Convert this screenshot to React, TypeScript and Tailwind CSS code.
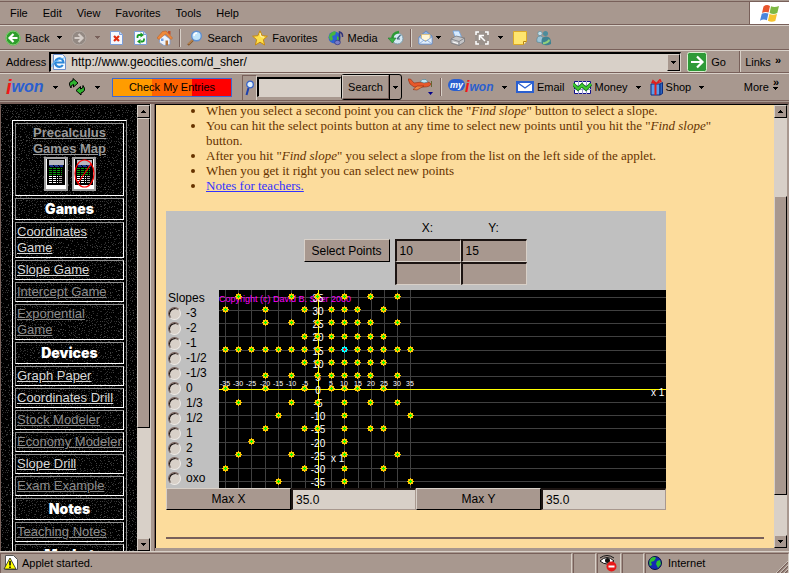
import { useState } from 'react';
import type { ReactNode } from 'react';

const slopes = ['-3', '-2', '-1', '-1/2', '-1/3', '0', '1/3', '1/2', '1', '2', '3', 'oxo'];

type NavItem = { label: string; kind: 'head' | 'link' | 'visited' };

const navItems: NavItem[] = [
  { label: 'Games', kind: 'head' },
  { label: 'Coordinates\nGame', kind: 'link' },
  { label: 'Slope Game', kind: 'link' },
  { label: 'Intercept Game', kind: 'visited' },
  { label: 'Exponential\nGame', kind: 'visited' },
  { label: 'Devices', kind: 'head' },
  { label: 'Graph Paper', kind: 'link' },
  { label: 'Coordinates Drill', kind: 'link' },
  { label: 'Stock Modeler', kind: 'visited' },
  { label: 'Economy Modeler', kind: 'visited' },
  { label: 'Slope Drill', kind: 'link' },
  { label: 'Exam Example', kind: 'visited' },
  { label: 'Notes', kind: 'head' },
  { label: 'Teaching Notes', kind: 'visited' },
  { label: 'Market', kind: 'head' },
];

// pixel columns and rows of the grid, from -35 to 35 in steps of 5
const lineX = [6, 19, 32, 46, 59, 72, 86, 99, 112, 125, 139, 152, 165, 178, 191];
const lineY = [191, 178, 165, 152, 138, 125, 112, 99, 86, 73, 60, 46, 33, 20, 7];
// the points are rounded down, so some fall a pixel before the line
const dotX = [6, 19, 32, 46, 59, 72, 85, 98, 112, 125, 138, 151, 164, 178, 191];
const dotY = [191, 178, 164, 151, 138, 125, 112, 98, 85, 72, 59, 46, 32, 19, 6];

// points per row, keyed by y / 5, values are x / 5
const points: Record<string, number[]> = {
  '7': [-6, -2, 0, 2, 4, 6],
  '6': [-7, -4, -1, 1, 2, 3, 5],
  '5': [-4, -2, 0, 1, 2, 3, 4, 6],
  '4': [-1, 0, 1, 2, 3, 4, 5],
  '3': [-7, -6, -5, -4, -3, -2, -1, 0, 1, 2, 3, 4, 5, 6, 7],
  '2': [-1, 0, 1, 2, 3, 4, 5],
  '1': [-4, -2, 0, 1, 2, 3, 4, 6],
  '0': [-7, -4, -1, 1, 2, 3, 5],
  '-1': [-6, -2, 0, 2, 4, 6],
  '-2': [-3, 2, 7],
  '-3': [-4, -1, 0, 2, 4, 5],
  '-4': [-5, 2],
  '-5': [-6, -2, 2, 6],
  '-6': [-7, -1, 2, 5],
  '-7': [-3, 2, 7],
};

const raised = 'border border-t-[#d8d0c8] border-l-[#d8d0c8] border-r-black border-b-black bg-[#a8988f]';

function Caret({ color = '#000' }: { color?: string }) {
  return (
    <svg width="6" height="3" viewBox="0 0 6 3" className="shrink-0" shapeRendering="crispEdges">
      <path d="M0 0h5v1h-1v1h-1v1h-1v-1h-1v-1h-1z" fill={color} />
    </svg>
  );
}

function Menu({ label, color }: { label: string; color?: string }) {
  return (
    <button aria-label={label} className="flex items-center h-4">
      <Caret color={color} />
    </button>
  );
}

function Sep() {
  return <div className="w-0.5 h-[18px] border-l border-l-[#78605a] border-r border-r-[#d8d0c8]" />;
}

function Icon({ children, w = 16, h = 16 }: { children: ReactNode; w?: number; h?: number }) {
  return (
    <svg width={w} height={h} viewBox={`0 0 ${w} ${h}`} className="shrink-0">
      {children}
    </svg>
  );
}

function Magnifier() {
  return (
    <Icon>
      <path d="M6.5 9.5L1 15" stroke="#8a5a2c" strokeWidth="2.4" />
      <path d="M6 9.5L1.5 14" stroke="#d9a066" strokeWidth="1" />
      <circle cx="9.5" cy="6" r="4.8" fill="#bfe4fb" stroke="#5f8fd0" strokeWidth="1.4" />
      <path d="M7 6a3 3 0 0 1 3-3" stroke="#fff" strokeWidth="1.4" fill="none" />
    </Icon>
  );
}

function Row({ children, className = '' }: { children: ReactNode; className?: string }) {
  return (
    <div className={`flex items-center border-t border-t-[#d8d0c8] border-b border-b-[#78605a] ${className}`}>
      {children}
    </div>
  );
}

function MenuBar() {
  return (
    <div className="flex h-6 border-t border-t-[#78605a] border-b border-b-[#78605a]">
      <nav className="flex flex-1 items-center gap-[15px] pl-2.5">
        {['File', 'Edit', 'View', 'Favorites', 'Tools', 'Help'].map(m => (
          <button key={m}>{m}</button>
        ))}
      </nav>
      <div className="w-10 bg-white border-l border-l-[#78605a] flex items-center justify-center">
        <Icon w={21} h={19}>
          <path d="M4.5 2.4Q7.5 0 11 1.9L9.6 8.6Q6.500 7 3 9z" fill="#e8552d" />
          <path d="M12 2.3Q15.500 4 20 2L18.300 9Q14.500 10.800 10.600 8.900z" fill="#7db843" />
          <path d="M2.700 10Q6 8 9.400 9.600L7.900 16.300Q4.500 14.600 1 16.700z" fill="#4a86dd" />
          <path d="M10.400 10Q14 11.600 18 10L16.300 17Q12.500 18.700 8.900 16.800z" fill="#f6c32e" />
        </Icon>
      </div>
    </div>
  );
}

function ButtonBar() {
  return (
    <Row className="h-[25px] pl-[5px]">
      <div className="flex items-center gap-2">
        <button className="flex items-center gap-1">
          <Icon>
            <circle cx="8" cy="8" r="7.5" fill="#2f9e2d" />
            <circle cx="8" cy="8" r="7" fill="none" stroke="#8fd67c" />
            <path d="M8.5 4L4.5 8l4 4M5 8h7.5" stroke="#fff" strokeWidth="2.2" fill="none" />
          </Icon>
          Back
        </button>
        <Menu label="Back history" />
        <button aria-label="Forward">
          <Icon>
            <circle cx="8" cy="8" r="7.5" fill="#938983" />
            <circle cx="8" cy="8" r="7" fill="none" stroke="#b8aca5" />
            <path d="M7.5 4l4 4-4 4M11 8H3.5" stroke="#d5cdc8" strokeWidth="2.2" fill="none" />
          </Icon>
        </button>
        <Menu label="Forward history" color="#78605a" />
        <button aria-label="Stop">
          <Icon>
            <path d="M1.5 1.5h9l3 3v10h-12z" fill="#f4f8ff" stroke="#7d9ed8" />
            <path d="M10.5 1.5v3h3" fill="#c7dbf5" stroke="#7d9ed8" />
            <path d="M5 6l5 5M10 6l-5 5" stroke="#e02c10" strokeWidth="2.2" />
          </Icon>
        </button>
        <button aria-label="Refresh">
          <Icon>
            <path d="M1.5 1.5h9l3 3v10h-12z" fill="#f4f8ff" stroke="#7d9ed8" />
            <path d="M10.5 1.5v3h3" fill="#c7dbf5" stroke="#7d9ed8" />
            <path d="M4.500 8V6.500q0-1.500 1.500-1.500h2" stroke="#189a22" strokeWidth="1.8" fill="none" />
            <path d="M11 8.500V10q0 1.500-1.500 1.500H7.500" stroke="#189a22" strokeWidth="1.8" fill="none" />
            <path d="M7.500 2.500l3.500 2.600-3.500 2.400zM7.500 9l-3.500 2.600 3.500 2.400z" fill="#189a22" />
          </Icon>
        </button>
        <button aria-label="Home">
          <Icon>
            <path d="M2.5 7.5L7 4.5l6 4.5v5.5l-6 1-4.5-3z" fill="#eef3fc" stroke="#7f9acb" strokeWidth=".8" />
            <path d="M0 8L5.5 1.5 9 1l6.500 7-1.500 1.500L8.500 4 2 9.500z" fill="#ee8a3c" stroke="#b9571f" strokeWidth=".5" />
            <path d="M11 1h2.500v4L11 3z" fill="#c2502c" />
            <path d="M8.500 10.500h2.500v5H8.500z" fill="#b5743c" />
            <path d="M4 8.500h2.500v2.500H4z" fill="#6f9de0" />
          </Icon>
        </button>
      </div>
      <div className="flex items-center gap-1.5 pl-1.5">
        <Sep />
        <div className="flex items-center gap-2.5">
          <button className="flex items-center gap-1">
            <Magnifier />
            Search
          </button>
          <button className="flex items-center gap-1">
            <Icon>
              <path d="M8 .8l2.1 4.900 5.300.5-4 3.500 1.200 5.300L8 12.200 3.400 15l1.200-5.300-4-3.500 5.300-.5z" fill="#ffe04a" stroke="#c88a10" />
              <path d="M8 3l1 3.700 3 .4" stroke="#fff8c0" fill="none" />
            </Icon>
            Favorites
          </button>
          <button className="flex items-center gap-1">
            <Icon>
              <circle cx="6.5" cy="7.5" r="6" fill="#2e62d2" />
              <path d="M2 4q4-4 6-2l-1 3-3 1 1 3-2 2Q-.5 8 2 4z" fill="#48b63c" />
              <path d="M9 6l3 2-1 3-2-1z" fill="#48b63c" />
              <path d="M11.500 12V2q3.500 1 3 5" stroke="#30347c" strokeWidth="1.5" fill="none" />
              <ellipse cx="9.5" cy="12.5" rx="2.8" ry="2.2" fill="#777cc8" stroke="#30347c" strokeWidth=".7" />
            </Icon>
            Media
          </button>
          <button aria-label="History">
            <Icon>
              <circle cx="9.5" cy="8.5" r="5.5" fill="#d5e9f4" stroke="#7a9bab" />
              <path d="M9 9l3.500-4M9 9h3" stroke="#43687c" strokeWidth="1.2" />
              <path d="M4.500 9Q4 3 11 2" stroke="#2c9a35" strokeWidth="2.4" fill="none" />
              <path d="M0 8h8l-3.500 5z" fill="#3bb045" stroke="#1d7a28" strokeWidth=".6" />
            </Icon>
          </button>
        </div>
        <Sep />
        <div className="flex items-center gap-2">
          <div className="flex items-center gap-0.5">
            <button aria-label="Mail">
              <Icon>
                <path d="M1 7l7-6 6 5v8H1z" fill="#8fb4e6" stroke="#5b82bd" strokeWidth=".8" />
                <path d="M3.500 4.500h8.500v6h-8.500z" fill="#fff6d8" stroke="#e3b85e" strokeWidth=".7" />
                <path d="M1 14V7l6.500 4.500L14 7v7z" fill="#e3effc" stroke="#7aa0d4" strokeWidth=".8" />
                <path d="M1 14l5-4M14 14l-5-4" stroke="#7aa0d4" strokeWidth=".8" />
              </Icon>
            </button>
            <Menu label="Mail options" />
          </div>
          <button aria-label="Print">
            <Icon>
              <path d="M3 1h6l2.500 6H5z" fill="#d7ebff" stroke="#6fa3df" strokeWidth=".8" />
              <path d="M1 9l5-3 8.500 2v4L9 15.500 1 13z" fill="#c4c4c6" stroke="#77777b" strokeWidth=".8" />
              <path d="M1 9l8 2.500 5.500-3.500M9 11.500v4" stroke="#77777b" strokeWidth=".8" fill="none" />
              <path d="M3 12l5 1.500" stroke="#fff" />
            </Icon>
          </button>
          <button aria-label="Full screen">
            <Icon>
              <path d="M1 1h14v14H1z" fill="#9b928c" />
              <path d="M2 5V2h3M11 2h3v3M14 11v3h-3M5 14H2v-3" stroke="#fff" strokeWidth="1.5" fill="none" />
              <path d="M5.500 10V5.500H10M6 6l5 5" stroke="#fff" strokeWidth="1.5" fill="none" />
            </Icon>
          </button>
          <Menu label="Full screen options" />
          <button aria-label="Note">
            <Icon>
              <path d="M1.5 1.5h13v10l-3 3h-10z" fill="#ffe56e" stroke="#dca927" />
              <path d="M11.5 14.5v-3h3" fill="#fff6b8" stroke="#b88410" />
            </Icon>
          </button>
          <button aria-label="Messenger">
            <Icon>
              <circle cx="4" cy="3.5" r="2.2" fill="#c5dfe8" stroke="#4e8597" strokeWidth=".6" />
              <path d="M1 12q-1-6 3.500-6 3 0 3 4l-1 3z" fill="#9cc5d8" stroke="#4e8597" strokeWidth=".6" />
              <circle cx="9.5" cy="3.5" r="2.5" fill="#4b8c9c" />
              <path d="M6 14q-2-7 4-7.500 5.500 0 5 7.500-4.500 2.500-9 0z" fill="#3e8291" />
              <path d="M7 12q3 1 6-3l1 2q-3 4-7 3z" fill="#92d07b" />
            </Icon>
          </button>
        </div>
      </div>
    </Row>
  );
}

function AddressBar() {
  return (
    <Row className="h-[23px] pl-1.5">
      <label htmlFor="address" className="mr-[3px]">Address</label>
      <div className="flex flex-1 items-center h-5 bg-[#d8d0c8] border border-t-2 border-l-2 border-t-black border-l-black border-[#d8d0c8]">
        <Icon w={17} h={17}>
          <path d="M2.5.5h9l3 3v12h-12z" fill="#f5faff" stroke="#7090c8" />
          <path d="M11.800 11A4.200 4.200 0 1 1 12.500 8.500H5" fill="none" stroke="#2a86d8" strokeWidth="2.2" />
          <path d="M1 13Q-1 8 14.500 3.500" stroke="#62b4f4" strokeWidth="1.2" fill="none" />
        </Icon>
        <input id="address" defaultValue="http://www.geocities.com/d_sher/" className="flex-1 min-w-0 bg-transparent pl-[3px] outline-none text-[12px]" />
        <button aria-label="Address history" className={`w-[13px] self-stretch flex items-center justify-center ${raised}`}>
          <Caret />
        </button>
      </div>
      <button className="flex items-center gap-1 ml-1.5 w-[52px]">
        <Icon w={20} h={20}>
          <rect x=".5" y=".5" width="19" height="19" rx="2" fill="#2e9a37" stroke="#d9f0d0" />
          <path d="M4 10h11M10 4.500l5.500 5.500-5.500 5.500" stroke="#fff" strokeWidth="2.2" fill="none" />
        </Icon>
        Go
      </button>
      <div className="w-0.5 self-stretch border-l border-l-[#78605a] border-r border-r-[#d8d0c8]" />
      <button className="flex items-start gap-1 pl-1 pr-2">
        Links <span className="font-bold leading-3">»</span>
      </button>
    </Row>
  );
}

function IwonBar() {
  return (
    <Row className="h-7 pl-1.5 text-[11px]">
      <div className="flex items-center gap-[9px]">
        <a href="#iwon" aria-label="iwon" className="flex items-center w-[38px] italic font-bold text-[16px] leading-5 text-[#2a5fd0]">
          <span className="text-[#f01818] text-[20px]">i</span>won
        </a>
        <Menu label="iwon menu" />
        <button aria-label="Reload">
          <Icon w={18} h={18}>
            <path d="M3 10Q-1 4 5 2.500V.5l5 4.500-4.500 4V6.500Q2.500 7 3 10z" fill="#2fb52f" stroke="#000" />
            <path d="M15 7.500Q19 13 13 15v2l-5-4.500 4.500-4V11q3-.5 2.500-3.500z" fill="#2fb52f" stroke="#000" />
          </Icon>
        </button>
        <Menu label="Reload options" />
      </div>
      <button className="ml-[11px] w-[120px] h-[19px] border border-[#4068d0] bg-[linear-gradient(90deg,#ff9c00_33%,#ff6300_33%,#ff6300_67%,#ff0000_67%)]">
        Check My Entries
      </button>
      <div className="ml-2.5 w-[15px] h-[25px] flex items-center justify-center border-l border-t border-[#78605a] border-r border-r-[#d8d0c8]">
        <Icon w={9} h={16}>
          <path d="M3.5 8L1.5 15" stroke="#1b3fae" strokeWidth="2" />
          <circle cx="5" cy="4.5" r="3.3" fill="#dff1ff" stroke="#3763c8" strokeWidth="1.3" />
        </Icon>
      </div>
      <input aria-label="Search the web" className="w-[84px] h-5 bg-[#d8d0c8] border border-t-2 border-l-2 border-[#d8d0c8] border-t-black border-l-black" />
      <div className="flex h-[26px] rounded-[3px] border border-black">
        <button className="w-[47px] border border-[#d8d0c8] border-r-[#78605a] border-b-[#78605a]">Search</button>
        <button aria-label="Search options" className="w-3 flex items-center justify-center border-l border-l-black">
          <Caret />
        </button>
      </div>
      <button aria-label="Travel" className="ml-1.5 flex items-center">
        <Icon w={26} h={18}>
          <path d="M0 1l2.500 0 3.500 4L14 4q7-1 9 2-1 3-7 3L6 9 2 6z" fill="#e8582a" stroke="#8f2d14" strokeWidth=".6" />
          <path d="M12 3.500q2-3 6-2l2 2.500-4 1z" fill="#bfe6f4" stroke="#4c7b8c" strokeWidth=".6" />
          <path d="M9 8l-4 3.500 4 .5 7-4z" fill="#f08240" stroke="#8f2d14" strokeWidth=".6" />
          <path d="M23.500 3v6" stroke="#663" />
          <path d="M20 14h5l-2.500 3z" fill="#00008b" />
        </Icon>
      </button>
      <div className="flex items-center gap-1.5 ml-1.5">
        <Sep />
        <a href="#my" aria-label="my iwon" className="flex items-center w-[46px] text-[12px] leading-4 font-bold italic text-[#2a5fd0]">
          <span className="bg-[#2a5fd0] text-white text-[9px] leading-3 rounded-full px-0.5 mb-1">my</span>
          <span className="text-[#f01818] text-[16px]">i</span>won
        </a>
      </div>
      <div className="flex items-center gap-2 ml-2">
        <Menu label="my iwon menu" />
        <button className="flex items-center gap-[3px]">
          <Icon w={18} h={12}>
            <path d="M1 1h16v10H1z" fill="#fff" stroke="#2a5fd0" strokeWidth="2" />
            <path d="M2 2l7 5 7-5" stroke="#2a5fd0" strokeWidth="1.3" fill="none" />
          </Icon>
          Email
        </button>
        <button className="flex items-center gap-[3px]">
          <Icon w={19} h={15}>
            <path d="M1.5 1.5h16v12h-16z" fill="#fff" stroke="#10108c" />
            <path d="M5.5 1v13M9.500 1v13M13.500 1v13M1 5.500h17M1 9.500h17" stroke="#9a9ad0" />
            <path d="M0 4l5 5 4-4 4 4 5-5" stroke="#14781c" strokeWidth="3.6" fill="none" />
            <path d="M0 4l5 5 4-4 4 4 5-5" stroke="#40cc30" strokeWidth="1.8" fill="none" />
          </Icon>
          Money
        </button>
        <Menu label="Money menu" />
        <button className="flex items-center gap-[3px]">
          <Icon w={13} h={17}>
            <path d="M1 5h9v11H1z" fill="#5b9ce8" stroke="#0c2c80" />
            <path d="M10 5l2.500-1.500v11L10 16z" fill="#2d65c0" stroke="#0c2c80" />
            <path d="M5.500 5v11" stroke="#e01c1c" strokeWidth="2" />
            <path d="M6.500 4.500L3 1.500 2 3.500zM6.500 4.500L10 .5l1 2z" fill="none" stroke="#e01c1c" strokeWidth="1.3" />
          </Icon>
          Shop
        </button>
        <Menu label="Shop menu" />
      </div>
      <button className="flex items-center gap-1 ml-auto pr-2.5">
        More
        <span className="flex flex-col items-center pb-1.5">
          <span className="font-bold leading-[9px]">»</span>
          <Caret />
        </span>
      </button>
    </Row>
  );
}

function ArrowButton({ up }: { up?: boolean }) {
  return (
    <button aria-label={up ? 'Scroll up' : 'Scroll down'} className={`h-[13px] shrink-0 flex items-center justify-center ${raised}`}>
      <svg width="5" height="3" viewBox="0 0 5 3" shapeRendering="crispEdges">
        {up ? <path d="M2 0h1v1h1v1h1v1H0V2h1V1h1z" /> : <path d="M0 0h5v1H4v1H3v1H2V2H1V1H0z" />}
      </svg>
    </button>
  );
}

function ScrollBar({ children }: { children: ReactNode }) {
  return (
    <div className="w-[13px] shrink-0 flex flex-col bg-[#d8d0c8]">
      <ArrowButton up />
      <div className="flex-1 min-h-0 flex flex-col">{children}</div>
      <ArrowButton />
    </div>
  );
}

function Calculator({ crossed }: { crossed?: boolean }) {
  return (
    <svg width="24" height="34" viewBox="0 0 24 34" shapeRendering="crispEdges">
      <rect width="24" height="34" fill="#a0a0a0" />
      <rect x="2" y="2" width="20" height="30" fill="#fff" />
      <rect x="3" y="2" width="18" height="26" fill="#000" />
      <rect x="5" y="3" width="15" height="5" fill="#b8b8c0" />
      <path d="M5 8.500h15M6 9.500h13" stroke="#1c3490" strokeDasharray="4 1" />
      <path d="M5 11.500h13M5 13.500h13M5 15.500h13M5 17.500h13" stroke="#0c9a0c" strokeDasharray="3 1" />
      <path d="M5 19.500h9M5 21.500h9M5 23.500h9M5 25.500h9" stroke="#fff" strokeDasharray="3 1" />
      <path d="M15 19.500h3M15 21.500h3M15 23.500h3M15 25.500h3" stroke="#b0a8a8" />
      {crossed && (
        <g stroke="#f00" strokeWidth="1.2" fill="none" shapeRendering="auto">
          <ellipse cx="12.5" cy="16.5" rx="9.5" ry="13.5" />
          <path d="M19 7L6 26" />
        </g>
      )}
    </svg>
  );
}

// speckled backdrop of the left frame
function Speckle() {
  const dots: ReactNode[] = [];
  let seed = 7;
  for (let y = 0; y < 60; y += 2) {
    for (let x = 0; x < 60; x += 2) {
      seed = (seed * 16807) % 2147483647;
      const n = Math.floor(seed / 1024);
      if (n % 7 < 4) {
        dots.push(
          <rect key={`${x}-${y}`} x={x + (n % 2)} y={y + ((n >> 3) % 2)} width="1" height="1" fill={n % 5 > 2 ? '#404040' : '#2c2c2c'} />
        );
      }
    }
  }
  return (
    <svg className="absolute inset-0 w-full h-full" aria-hidden="true" shapeRendering="crispEdges">
      <pattern id="speckle" width="60" height="60" patternUnits="userSpaceOnUse">
        {dots}
      </pattern>
      <rect width="100%" height="100%" fill="url(#speckle)" />
    </svg>
  );
}

function Sidebar() {
  const cell = 'border border-t-[#909090] border-l-[#909090] border-b-white border-r-white p-px shrink-0';
  return (
    <aside className="flex w-[150px] shrink-0 border-l border-l-[#78605a] border-t border-t-black">
      <div className="relative flex-1 bg-black overflow-hidden pt-[15px] pl-[11px] pr-[10px]">
        <Speckle />
        <nav className="relative flex flex-col gap-0.5 p-0.5 border border-t-white border-l-white border-[#909090] text-[13px] leading-4">
          <div className={`${cell} flex flex-col items-center h-[73px]`}>
            <a href="#map" className="font-bold text-[13px] text-center text-[#9a9a9a] underline whitespace-pre-line">
              {'Precalculus\nGames Map'}
            </a>
            <div className="flex gap-1">
              <Calculator />
              <Calculator crossed />
            </div>
          </div>
          {navItems.map(item =>
            item.kind === 'head' ? (
              <h2 key={item.label} className={`${cell} font-['Inter',sans-serif] font-black text-[14px] leading-[18px] text-center text-white`}>
                {item.label}
              </h2>
            ) : (
              <div key={item.label} className={`${cell} whitespace-pre`}>
                <a href="#game" className={item.kind === 'link' ? 'underline text-[#d8d8d8]' : 'underline text-[#8c8c8c]'}>
                  {item.label}
                </a>
              </div>
            )
          )}
        </nav>
      </div>
      <ScrollBar>
        <div className={`h-[310px] ${raised}`} />
      </ScrollBar>
    </aside>
  );
}

function Plot() {
  return (
    <svg viewBox="0 0 447 198" className="block w-full h-auto bg-black" shapeRendering="crispEdges">
      {lineX.map(x => <rect key={x} x={x} y="0" width="1" height="198" fill="#404040" />)}
      {lineY.map(y => <rect key={y} x="0" y={y} width="447" height="1" fill="#404040" />)}
      <text x="0" y="12" fill="#f0f" fontSize="9" fontFamily="Liberation Sans, sans-serif">Copyright (c) David B. Sher 2000</text>
      <rect x="0" y="99" width="447" height="1" fill="#ff0" />
      <rect x="99" y="0" width="1" height="198" fill="#ff0" />
      <g fill="#fff" fontFamily="Liberation Sans, sans-serif" textAnchor="middle">
        {lineY.map((y, i) => (
          <text key={y} x="99" y={y + 5} fontSize="10">{(i - 7) * 5}</text>
        ))}
        {lineX.map((x, i) => (
          i !== 7 && <text key={x} x={x} y="96" fontSize="7">{(i - 7) * 5}</text>
        ))}
      </g>
      <g fill="#fff" fontSize="10" fontFamily="Liberation Sans, sans-serif">
        <text x="112" y="172">x 1</text>
        <text x="432" y="106">x 1</text>
      </g>
      {Object.entries(points).map(([row, cols]) =>
        cols.map(col => {
          const picked = row === '3' && col === 2;
          return (
            <g key={`${row},${col}`} transform={`translate(${dotX[col + 7]} ${dotY[Number(row) + 7]})`}>
              <path d="M-2-2h2v-1h1v1h2v2h1v1h-1v2h-2v1h-1v-1h-2v-2h-1v-1h1z" fill={picked ? '#0ff' : '#ffc800'} />
              <path d="M0-1h1v1h1v1h-1v1h-1v-1h-1v-1h1z" fill={picked ? '#f00' : '#0f0'} />
            </g>
          );
        })
      )}
    </svg>
  );
}

function Applet() {
  const [slope, setSlope] = useState('');
  const field = 'w-[66px] h-[23px] px-[3px] bg-[#a8988f] border border-t-2 border-l-2 border-t-[#1c1412] border-l-[#1c1412] border-[#d8d0c8] outline-none';
  const value = 'min-w-0 px-[3px] bg-[#d8d0c8] border border-t-2 border-l-2 border-t-[#1c1412] border-l-[#1c1412] border-[#a8988f] outline-none';
  return (
    <section className="w-[500px] max-w-full bg-[#c0c0c0] text-black text-[12px] font-['Liberation_Sans',sans-serif]">
      <div className="flex justify-center items-end gap-[5px] pt-1.5 pb-[5px] pr-0.5">
        <button className={`h-[23px] w-[86px] mb-[23px] ${raised}`}>Select Points</button>
        <div className="grid grid-cols-2 text-center">
          <label htmlFor="x1" className="leading-[22px]">X:</label>
          <label htmlFor="y1" className="leading-[22px]">Y:</label>
          <input id="x1" defaultValue="10" className={field} />
          <input id="y1" defaultValue="15" className={field} />
          <input aria-label="Second X" className={field} />
          <input aria-label="Second Y" className={field} />
        </div>
      </div>
      <div className="flex">
        <fieldset className="w-[53px] shrink-0 pl-0.5 leading-[15px]">
          <legend className="h-4 pt-px">Slopes</legend>
          {slopes.map(s => (
            <label key={s} className="flex items-center gap-[5px] h-[15px]">
              <input
                type="radio"
                name="slope"
                checked={slope === s}
                onChange={() => setSlope(s)}
                className="appearance-none w-[13px] h-[13px] rounded-full bg-[#d8d0c8] border border-t-[#78605a] border-l-[#78605a] border-[#f0ece8] shadow-[inset_1px_1px_0_#1c1412] checked:bg-black"
              />
              {s}
            </label>
          ))}
        </fieldset>
        <div className="flex-1 min-w-0">
          <Plot />
        </div>
      </div>
      <div className="grid grid-cols-4 h-[22px]">
        <button className={raised}>Max X</button>
        <input aria-label="Max X" defaultValue="35.0" className={value} />
        <button className={raised}>Max Y</button>
        <input aria-label="Max Y" defaultValue="35.0" className={value} />
      </div>
    </section>
  );
}

function StatusBar() {
  const panel = 'border-l border-l-[#78605a] border-t border-t-[#78605a] border-r border-r-[#d8d0c8] h-5';
  return (
    <footer className="flex shrink-0 items-center gap-px h-[22px] border-t border-t-[#d8d0c8]">
      <div className={`flex flex-1 items-center gap-[3px] pl-0.5 ${panel}`}>
        <Icon>
          <path d="M2.5.5h8l4 4v10h-12z" fill="#fff" stroke="#555" />
          <path d="M7 3l6 11H1z" fill="#ff0" stroke="#222" strokeWidth=".8" />
          <path d="M7 6v4.500M7 11.500v1.500" stroke="#000" strokeWidth="1.5" />
        </Icon>
        Applet started.
      </div>
      <div className={`w-[23px] ${panel}`} />
      <div className={`w-6 flex items-center justify-center ${panel}`}>
        <Icon w={18} h={17}>
          <path d="M0 6q7-7 14 0-7 6-14 0z" fill="#fff" stroke="#111" />
          <path d="M0 3q7-5 14 0" stroke="#111" fill="none" />
          <circle cx="7.5" cy="5.5" r="2.5" fill="#111" />
          <circle cx="11.5" cy="11.5" r="5" fill="#e81818" />
          <path d="M8.5 11.5h6" stroke="#fff" strokeWidth="2" />
        </Icon>
      </div>
      <div className={`w-[22px] ${panel}`} />
      <div className={`w-36 flex items-center gap-1.5 pl-0.5 ${panel}`}>
        <Icon w={14} h={14}>
          <circle cx="7" cy="7" r="6.5" fill="#1428b4" stroke="#061040" />
          <path d="M3 2q4-2 5 0l-2 3-3 1 1 3-2 1Q0 6 3 2z" fill="#2fbf2f" />
          <path d="M9 5l3-1 1 4-3 4-2-4z" fill="#2fbf2f" />
        </Icon>
        <span className="flex-1">Internet</span>
        <svg width="12" height="12" viewBox="0 0 12 12" className="self-end">
          <path d="M1 12L12 1M5 12l7-7M9 12l3-3" stroke="#78605a" strokeWidth="1.5" />
          <path d="M0 12L12 0M4 12l8-8M8 12l4-4" stroke="#d8d0c8" strokeWidth=".8" />
        </svg>
      </div>
    </footer>
  );
}

export default function App() {
  const find = <i>Find slope</i>;
  return (
    <div className="flex flex-col h-screen overflow-hidden bg-[#a8988f] text-black text-[11px] leading-4 font-['Liberation_Sans',sans-serif]">
      <header className="shrink-0 pt-px pb-px border-b-2 border-b-[#78605a]">
        <MenuBar />
        <ButtonBar />
        <AddressBar />
        <IwonBar />
      </header>
      <div className="flex flex-1 min-h-0">
        <Sidebar />
        <div className="w-[5px] shrink-0 border-l border-l-[#d8d0c8] border-r border-r-[#78605a]" />
        <div className="flex flex-1 min-w-0 mb-[3px] border-l border-l-black border-t border-t-black border-r-2 border-r-[#a8988f]">
          <main className="flex-1 min-w-0 overflow-hidden bg-[#fcdc9c] px-2.5 text-[#663300]">
            <ul className="list-disc pl-10 pr-5 -mt-0.5 mb-[18px] font-['Liberation_Serif',serif] text-[13px] leading-[15px]">
              <li>When you select a second point you can click the "{find}" button to select a slope.</li>
              <li>You can hit the select points button at any time to select new points until you hit the "{find}" button.</li>
              <li>After you hit "{find}" you select a slope from the list on the left side of the applet.</li>
              <li>When you get it right you can select new points</li>
              <li><a href="#notes" className="text-[#3333ff] underline">Notes for teachers.</a></li>
            </ul>
            <Applet />
            <hr className="mt-[27px] border-t-2 border-t-[#78605a]" />
          </main>
          <ScrollBar>
            <div className="basis-[78px] shrink-0" />
            <div className={`h-[299px] ${raised}`} />
          </ScrollBar>
        </div>
      </div>
      <StatusBar />
    </div>
  );
}
